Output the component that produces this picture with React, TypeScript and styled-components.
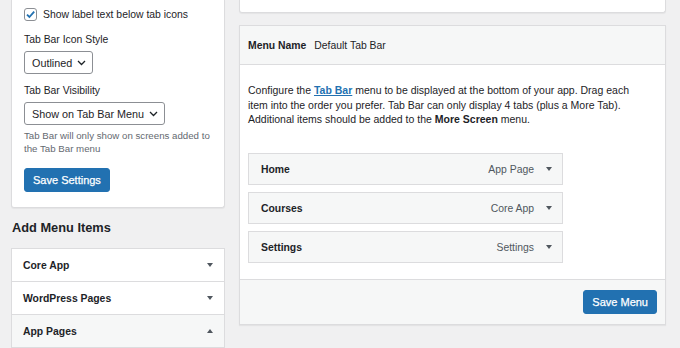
import styled, { createGlobalStyle } from 'styled-components'

const GlobalStyle = createGlobalStyle`
  html, body {
    margin: 0;
    padding: 0;
    background: #f0f0f1;
    overflow: hidden;
  }
  body {
    font-family: 'Liberation Sans', Arial, sans-serif;
    color: #1d2327;
    font-size: 10.4px;
  }
  * { box-sizing: border-box; }
`

const Page = styled.div`
  display: flex;
  align-items: flex-start;
  gap: 14px;
  padding-left: 11px;
  width: 680px;
  height: 348px;
`

const LeftCol = styled.div`
  width: 214px;
  display: flex;
  flex-direction: column;
`

const RightCol = styled.div`
  width: 427px;
  display: flex;
  flex-direction: column;
  gap: 12px;
`

const Panel = styled.div<{ $cutTop?: boolean }>`
  background: #fff;
  border: 1px solid #dcdcde;
  border-top: ${(p) => (p.$cutTop ? 'none' : '1px solid #dcdcde')};
  border-radius: ${(p) => (p.$cutTop ? '0 0 3px 3px' : '0')};
  box-shadow: 0 1px 1px rgba(0, 0, 0, 0.05);
`

const SettingsPanel = styled(Panel)`
  padding: 8px 12px 15px;
  display: flex;
  flex-direction: column;
`

const CheckRow = styled.label`
  display: flex;
  align-items: center;
  gap: 6px;
  height: 13px;
  margin-bottom: 12px;
`

const CheckBox = styled.span`
  width: 13px;
  height: 13px;
  border: 1px solid #8c8f94;
  border-radius: 3px;
  background: #fff;
  display: flex;
  align-items: center;
  justify-content: center;
`

const FieldLabel = styled.div`
  line-height: 13px;
  margin-bottom: 5px;
`

const Select = styled.div<{ $mb?: number }>`
  align-self: flex-start;
  height: 23px;
  border: 1px solid #8c8f94;
  border-radius: 3px;
  padding: 0 6px 0 7px;
  display: flex;
  align-items: center;
  gap: 5px;
  font-size: 10.8px;
  margin-bottom: ${(p) => p.$mb ?? 0}px;
`

const HelpText = styled.p`
  margin: 0 0 13px;
  color: #646970;
  font-size: 9.7px;
  line-height: 13px;
`

const Button = styled.button<{ $center?: boolean }>`
  align-self: ${(p) => (p.$center ? 'center' : 'flex-start')};
  height: 24px;
  padding: 0 8px;
  background: #2271b1;
  border: 1px solid #2271b1;
  border-radius: 3px;
  color: #fff;
  font-family: inherit;
  font-size: 11px;
  font-weight: 400;
  -webkit-text-stroke: 0.25px #fff;
`

const SectionTitle = styled.h2`
  margin: 14px 0 0 1px;
  font-size: 12.8px;
  font-weight: 600;
  line-height: 12px;
  height: 26px;
`

const Accordion = styled.div`
  border: 1px solid #dcdcde;
  background: #fff;
`

const AccRow = styled.div<{ $open?: boolean }>`
  height: 33px;
  display: flex;
  align-items: center;
  justify-content: space-between;
  padding: 0 11px 0 11px;
  font-weight: 700;
  background: ${(p) => (p.$open ? '#f6f7f7' : '#fff')};
  border-bottom: 1px solid #dcdcde;
`

const Tri = styled.span<{ $up?: boolean }>`
  width: 0;
  height: 0;
  border-left: 3.5px solid transparent;
  border-right: 3.5px solid transparent;
  ${(p) => (p.$up ? 'border-bottom' : 'border-top')}: 4px solid #50575e;
`

const TopStub = styled(Panel)`
  height: 13px;
`

const MenuPanel = styled(Panel)`
  display: flex;
  flex-direction: column;
`

const MenuHeader = styled.div`
  height: 39px;
  background: #f6f7f7;
  border-bottom: 1px solid #dcdcde;
  display: flex;
  align-items: center;
  gap: 8px;
  padding: 0 8px;

  strong {
    font-weight: 600;
  }
`

const MenuBody = styled.div`
  padding: 18px 8px 16px;
`

const Intro = styled.p`
  margin: 0 0 26px;
  line-height: 14.7px;
  font-size: 10.5px;

  a {
    color: #2271b1;
    font-weight: 600;
    text-decoration: underline;
  }
  strong {
    font-weight: 600;
  }
`

const ItemList = styled.div`
  width: 315px;
  display: flex;
  flex-direction: column;
  gap: 7px;
`

const Item = styled.div`
  height: 32px;
  background: #f6f7f7;
  border: 1px solid #dcdcde;
  display: flex;
  align-items: center;
  padding: 0 10px 0 12px;
  font-weight: 700;
`

const ItemType = styled.span`
  margin-left: auto;
  margin-right: 12px;
  font-weight: 400;
  color: #50575e;
`

const MenuFooter = styled.div`
  height: 45px;
  background: #f6f7f7;
  border-top: 1px solid #dcdcde;
  display: flex;
  align-items: center;
  justify-content: flex-end;
  padding: 0 8px;
`

const Chevron = () => (
  <svg width="9" height="6" viewBox="0 0 9 6">
    <path d="M1 1l3.5 3.5L8 1" fill="none" stroke="#1d2327" strokeWidth="1.3" />
  </svg>
)

const menuItems = [
  { name: 'Home', type: 'App Page' },
  { name: 'Courses', type: 'Core App' },
  { name: 'Settings', type: 'Settings' },
]

const App = () => {
  return (
    <>
      <GlobalStyle />
      <Page>
        <LeftCol>
          <SettingsPanel $cutTop>
            <CheckRow>
              <CheckBox>
                <svg width="11" height="11" viewBox="0 0 11 11">
                  <path d="M2 5.6l2.4 2.4L9.2 2.6" fill="none" stroke="#2271b1" strokeWidth="1.8" />
                </svg>
              </CheckBox>
              Show label text below tab icons
            </CheckRow>
            <FieldLabel>Tab Bar Icon Style</FieldLabel>
            <Select $mb={10}>
              Outlined <Chevron />
            </Select>
            <FieldLabel>Tab Bar Visibility</FieldLabel>
            <Select $mb={4}>
              Show on Tab Bar Menu <Chevron />
            </Select>
            <HelpText>Tab Bar will only show on screens added to the Tab Bar menu</HelpText>
            <Button>Save Settings</Button>
          </SettingsPanel>
          <SectionTitle>Add Menu Items</SectionTitle>
          <Accordion>
            <AccRow>
              Core App <Tri />
            </AccRow>
            <AccRow>
              WordPress Pages <Tri />
            </AccRow>
            <AccRow $open>
              App Pages <Tri $up />
            </AccRow>
          </Accordion>
        </LeftCol>
        <RightCol>
          <TopStub $cutTop />
          <MenuPanel>
            <MenuHeader>
              <strong>Menu Name</strong>
              <span>Default Tab Bar</span>
            </MenuHeader>
            <MenuBody>
              <Intro>
                Configure the <a href="#">Tab Bar</a> menu to be displayed at the bottom of your app. Drag each
                <br />
                item into the order you prefer. Tab Bar can only display 4 tabs (plus a More Tab).
                <br />
                Additional items should be added to the <strong>More Screen</strong> menu.
              </Intro>
              <ItemList>
                {menuItems.map((item) => (
                  <Item key={item.name}>
                    {item.name}
                    <ItemType>{item.type}</ItemType>
                    <Tri />
                  </Item>
                ))}
              </ItemList>
            </MenuBody>
            <MenuFooter>
              <Button $center>Save Menu</Button>
            </MenuFooter>
          </MenuPanel>
        </RightCol>
      </Page>
    </>
  )
}

export default App
